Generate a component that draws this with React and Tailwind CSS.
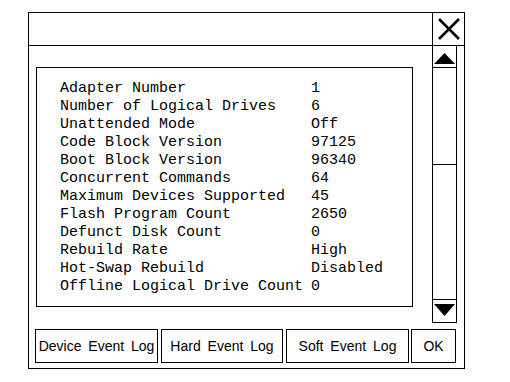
const ROWS = [
  ["Adapter Number", "1"],
  ["Number of Logical Drives", "6"],
  ["Unattended Mode", "Off"],
  ["Code Block Version", "97125"],
  ["Boot Block Version", "96340"],
  ["Concurrent Commands", "64"],
  ["Maximum Devices Supported", "45"],
  ["Flash Program Count", "2650"],
  ["Defunct Disk Count", "0"],
  ["Rebuild Rate", "High"],
  ["Hot-Swap Rebuild", "Disabled"],
  ["Offline Logical Drive Count", "0"],
];

const mono = { fontFamily: "'Liberation Mono', 'DejaVu Sans Mono', monospace" };

function Btn({ w, children }) {
  return (
    <div
      className={`${w} h-[34px] border border-black flex items-center justify-center text-[14px] [word-spacing:3px] text-black whitespace-nowrap`}
    >
      {children}
    </div>
  );
}

export default function App() {
  return (
    <div
      className="w-[510px] h-[382px] bg-white overflow-hidden pt-[12px] pl-[28px]"
      style={{ fontFamily: "'Liberation Sans', Arial, sans-serif" }}
    >
      <div className="w-[437px] h-[357px] border border-black flex flex-col">
        {/* title bar */}
        <div className="h-[33px] border-b border-black flex justify-end shrink-0">
          <div className="w-[32px] border-l border-black flex items-center justify-center">
            <svg width="22" height="22" viewBox="0 0 22 22">
              <path d="M1 1 L21 21 M21 1 L1 21" stroke="black" strokeWidth="2.6" fill="none" />
            </svg>
          </div>
        </div>
        {/* body */}
        <div className="flex h-[277px] shrink-0">
          <div className="w-[403px] pl-[7px] pt-[21px]">
            <div className="w-[377px] h-[240px] border border-black pl-[23px] pt-[12px]">
              <div className="grid grid-cols-[251px_1fr] text-[15px] leading-[18px] text-black" style={mono}>
                {ROWS.map(([k, v]) => (
                  <div key={k} className="contents">
                    <span className="whitespace-nowrap">{k}</span>
                    <span className="whitespace-nowrap">{v}</span>
                  </div>
                ))}
              </div>
            </div>
          </div>
          {/* scrollbar */}
          <div className="w-[25px] border-x border-b border-black flex flex-col">
            <div className="h-[22px] border-b border-black flex items-center justify-center">
              <svg width="21" height="12" viewBox="0 0 21 12" className="mt-[4px]">
                <polygon points="10.5,0 21,11 0,11" fill="black" />
              </svg>
            </div>
            <div className="h-[97px] border-b border-black" />
            <div className="flex-1" />
            <div className="h-[23px] border-t border-black flex items-center justify-center">
              <svg width="21" height="12" viewBox="0 0 21 12" className="mb-[2px]">
                <polygon points="0,0 21,0 10.5,12" fill="black" />
              </svg>
            </div>
          </div>
        </div>
        {/* buttons */}
        <div className="flex pl-[6px] pt-[6px] gap-[3px]">
          <Btn w="w-[123px]">Device Event Log</Btn>
          <Btn w="w-[122px]">Hard Event Log</Btn>
          <Btn w="w-[123px]">Soft Event Log</Btn>
          <div className="w-[45px] h-[34px] border border-black flex items-center justify-center text-[14px] -ml-[1px]">
            OK
          </div>
        </div>
      </div>
    </div>
  );
}
